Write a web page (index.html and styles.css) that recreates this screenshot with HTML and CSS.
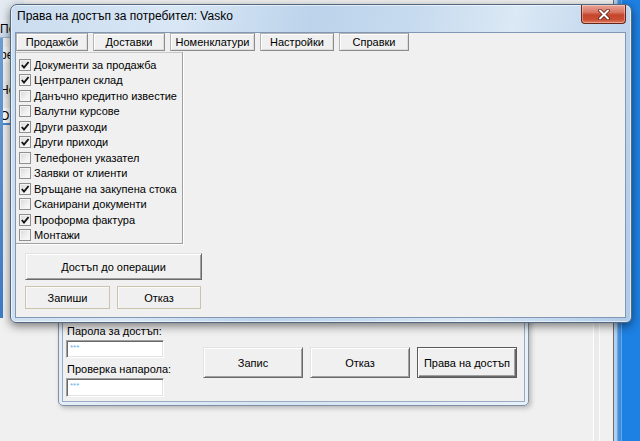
FILE: index.html
```html
<!DOCTYPE html>
<html>
<head>
<meta charset="utf-8">
<link rel="stylesheet" href="styles.css">
</head>
<body>
<div class="appwin">
  <div class="bit bit-top"></div>
  <div class="bit bit-title">По</div>
  <div class="bit bit-row1">ре</div>
  <div class="bit bit-row2">Но</div>
  <div class="bit bit-row3">О</div>
  <div class="bit bit-stripe"></div>
  <div class="app-lines"></div>
</div>
<div class="appframe"></div>

<div class="pwdwin">
  <div class="pwd-client">
    <div class="pwd-fields">
      <div class="lbl">Парола за достъп:</div>
      <div class="field">***</div>
      <div class="lbl lbl2">Проверка напарола:</div>
      <div class="field field2">***</div>
    </div>
    <div class="pwd-buttons">
      <div class="btn raised big">Запис</div>
      <div class="btn raised big">Отказ</div>
      <div class="btn raised big default">Права на достъп</div>
    </div>
  </div>
</div>

<div class="dialog">
  <div class="titlebar">
    <span class="title">Права на достъп за потребител: Vasko</span>
    <div class="close">
      <svg width="14" height="11" viewBox="0 0 14 11"><path d="M3 1.5 L11 9.5 M11 1.5 L3 9.5" stroke="#5a1f14" stroke-width="3.6" stroke-linecap="round"/><path d="M3 1.5 L11 9.5 M11 1.5 L3 9.5" stroke="#ffffff" stroke-width="2" stroke-linecap="round"/></svg>
    </div>
  </div>
  <div class="client">
    <div class="tabs">
      <div class="btn tab w1">Продажби</div>
      <div class="btn tab w2">Доставки</div>
      <div class="btn tab w3">Номенклатури</div>
      <div class="btn tab w4">Настройки</div>
      <div class="btn tab w5">Справки</div>
    </div>
    <div class="checklist">
      <div class="item"><span class="cb"><svg width="10" height="10" viewBox="0 0 10 10"><path d="M1.8 5 L4 7.6 L8.6 2" fill="none" stroke="#151515" stroke-width="1.9"/></svg></span>Документи за продажба</div>
      <div class="item"><span class="cb"><svg width="10" height="10" viewBox="0 0 10 10"><path d="M1.8 5 L4 7.6 L8.6 2" fill="none" stroke="#151515" stroke-width="1.9"/></svg></span>Централен склад</div>
      <div class="item"><span class="cb"></span>Данъчно кредитно известие</div>
      <div class="item"><span class="cb"></span>Валутни курсове</div>
      <div class="item"><span class="cb"><svg width="10" height="10" viewBox="0 0 10 10"><path d="M1.8 5 L4 7.6 L8.6 2" fill="none" stroke="#151515" stroke-width="1.9"/></svg></span>Други разходи</div>
      <div class="item"><span class="cb"><svg width="10" height="10" viewBox="0 0 10 10"><path d="M1.8 5 L4 7.6 L8.6 2" fill="none" stroke="#151515" stroke-width="1.9"/></svg></span>Други приходи</div>
      <div class="item"><span class="cb"></span>Телефонен указател</div>
      <div class="item"><span class="cb"></span>Заявки от клиенти</div>
      <div class="item"><span class="cb"><svg width="10" height="10" viewBox="0 0 10 10"><path d="M1.8 5 L4 7.6 L8.6 2" fill="none" stroke="#151515" stroke-width="1.9"/></svg></span>Връщане на закупена стока</div>
      <div class="item"><span class="cb"></span>Сканирани документи</div>
      <div class="item"><span class="cb"><svg width="10" height="10" viewBox="0 0 10 10"><path d="M1.8 5 L4 7.6 L8.6 2" fill="none" stroke="#151515" stroke-width="1.9"/></svg></span>Проформа фактура</div>
      <div class="item"><span class="cb"></span>Монтажи</div>
    </div>
    <div class="btn raised ops">Достъп до операции</div>
    <div class="actions">
      <div class="btn flat save">Запиши</div>
      <div class="btn flat cancel">Отказ</div>
    </div>
  </div>
</div>
</body>
</html>
```
FILE: styles.css
```css
* { box-sizing: border-box; }

body {
  margin: 0;
  width: 640px;
  height: 441px;
  overflow: hidden;
  position: relative;
  background: #1d80e3;
  font-family: "Liberation Sans", Arial, sans-serif;
  font-size: 11px;
  color: #000;
}

/* background application window */
.appwin {
  position: absolute;
  left: 0;
  top: 0;
  width: 614px;
  height: 441px;
  background: #f0f0f0;
  border-right: 1px solid #6c6c6c;
}
.appframe {
  position: absolute;
  left: 614px;
  top: 0;
  width: 8px;
  height: 441px;
  background: linear-gradient(to right, #b9d6f1 0, #a5caee 35%, #4a94e0 50%, #3a86d9 85%, #8cbff0 100%);
}
.bit {
  position: absolute;
  left: 0;
  width: 24px;
  white-space: nowrap;
  font-size: 12px;
  line-height: 16px;
}
.bit-top { top: 0; height: 20px; background: #e4eaf1; }
.bit-title { top: 21px; height: 17px; background: linear-gradient(#e6eef7, #c9d9ea); border-bottom: 1px solid #9fb4cc; }
.bit-row1 { top: 47px; height: 15px; background: #f7f7f7; }
.bit-row2 { top: 82px; height: 16px; background: #ececec; }
.bit-row3 { top: 108px; height: 17px; background: #fff; border-bottom: 2px solid #4a88d0; }
.bit-stripe { top: 38px; width: 3px; height: 280px; background: linear-gradient(#6e9fd6, #3b7bc8); }
.app-lines {
  position: absolute;
  left: 593px;
  top: 300px;
  width: 7px;
  height: 141px;
  border-left: 1px solid #ffffff;
  border-right: 1px solid #fbfbfb;
  background: #ebebeb;
}

/* generic button faces */
.btn {
  display: flex;
  align-items: center;
  justify-content: center;
  background: #f0f0f0;
  white-space: nowrap;
}
.raised {
  border: 1px solid;
  border-color: #e3e3e3 #696969 #696969 #e3e3e3;
  box-shadow: inset 1px 1px 0 #ffffff, inset -1px -1px 0 #a0a0a0;
}
.flat {
  border: 1px solid #cbc3ab;
  box-shadow: inset 1px 1px 0 #fafafa;
}
.tab {
  height: 18px;
  border: 1px solid;
  border-color: #b4b4b4 #8c8c8c #8c8c8c #b4b4b4;
  box-shadow: inset 1px 1px 0 #ffffff, inset -1px -1px 0 #dcdcdc;
}

/* password window (behind) */
.pwdwin {
  position: absolute;
  left: 58px;
  top: 300px;
  width: 471px;
  height: 106px;
  border: 1px solid #7e8fa3;
  border-radius: 0 0 5px 5px;
  padding: 0 3px 3px 3px;
  background: linear-gradient(to right, #e4eef8, #d6e5f4 50%, #e8f1fa);
  box-shadow: 2px 2px 5px rgba(0, 0, 0, 0.25);
}
.pwd-client {
  height: 100%;
  background: #f0f0f0;
  border: 1px solid #9aaac0;
  display: flex;
  padding: 23px 0 0 3px;
}
.pwd-fields {
  width: 98px;
  display: flex;
  flex-direction: column;
}
.lbl {
  line-height: 13px;
  height: 13px;
  padding-left: 1px;
  font-size: 11px;
  white-space: nowrap;
}
.lbl2 { margin-top: 5px; }
.field {
  margin-top: 2px;
  height: 18px;
  background: #fff;
  border: 1px solid;
  border-color: #a0a0a0 #ffffff #ffffff #a0a0a0;
  box-shadow: inset 1px 1px 0 #696969, inset -1px -1px 0 #e3e3e3;
  color: #6aaeea;
  font-size: 8px;
  line-height: 10px;
  padding: 2px 0 0 3px;
}
.field2 { height: 19px; }
.pwd-buttons {
  display: flex;
  gap: 7px;
  margin-left: 39px;
  margin-top: 22px;
  align-items: flex-start;
}
.big {
  width: 100px;
  height: 31px;
  font-size: 11px;
}
.default {
  border: 1px solid #5a5a5a;
  box-shadow: inset 1px 1px 0 #ffffff, inset -1px -1px 0 #696969, inset -2px -2px 0 #a0a0a0;
}

/* main dialog */
.dialog {
  position: absolute;
  left: 10px;
  top: 4px;
  width: 622px;
  height: 319px;
  border: 1px solid #52687f;
  border-radius: 7px 7px 6px 6px;
  background: linear-gradient(100deg, #cadcef 0%, #d9e7f5 25%, #bcd3eb 45%, #c7dbef 60%, #dbe8f5 75%, #afcbe8 100%);
  box-shadow: inset 0 0 0 1px rgba(255, 255, 255, 0.55), 0 3px 10px rgba(0, 0, 0, 0.5);
  display: flex;
  flex-direction: column;
}
.titlebar {
  height: 27px;
  display: flex;
  align-items: flex-start;
  padding-left: 6px;
}
.title {
  font-size: 12px;
  line-height: 15px;
  padding-top: 4px;
  color: #000;
  white-space: nowrap;
}
.close {
  margin-left: auto;
  margin-right: 5px;
  width: 45px;
  height: 19px;
  border: 1px solid #6b2418;
  border-top: none;
  border-radius: 0 0 4px 4px;
  background: linear-gradient(#eaa497 0%, #d97562 40%, #c5462e 55%, #c94d33 80%, #e07a5c 100%);
  box-shadow: inset 0 0 0 1px rgba(255, 255, 255, 0.35);
  display: flex;
  align-items: center;
  justify-content: center;
}
.client {
  flex: 1;
  margin: 0 5px 4px 4px;
  background: #f0f0f0;
  border: 1px solid #8197b3;
  display: flex;
  flex-direction: column;
  align-items: flex-start;
}
.tabs {
  display: flex;
  gap: 5px;
  height: 18px;
}
.w1 { width: 72px; }
.w2 { width: 72px; }
.w3 { width: 85px; }
.w4 { width: 74px; }
.w5 { width: 70px; }

.checklist {
  margin-top: 1px;
  width: 167px;
  border-top: 1px solid #c8c8c8;
  border-right: 1px solid #a0a0a0;
  border-bottom: 1px solid #a0a0a0;
  box-shadow: 1px 1px 0 #ffffff;
  padding: 4px 0 0 3px;
}
.item {
  height: 15.5px;
  display: flex;
  align-items: center;
  white-space: nowrap;
  font-size: 11px;
}
.cb {
  width: 12px;
  height: 12px;
  margin-right: 3px;
  border: 1px solid #8f8f8f;
  background: linear-gradient(135deg, #d6d8dc 0%, #f0f0f0 60%, #fbfbfb 100%);
  box-shadow: inset 0 0 0 1px #f4f4f4;
  display: flex;
  align-items: center;
  justify-content: center;
  flex: none;
}
.ops {
  margin: 9px 0 0 9px;
  width: 177px;
  height: 27px;
}
.actions {
  display: flex;
  gap: 7px;
  margin: 6px 0 0 9px;
}
.save { width: 85px; height: 23px; }
.cancel { width: 84px; height: 23px; }
```
